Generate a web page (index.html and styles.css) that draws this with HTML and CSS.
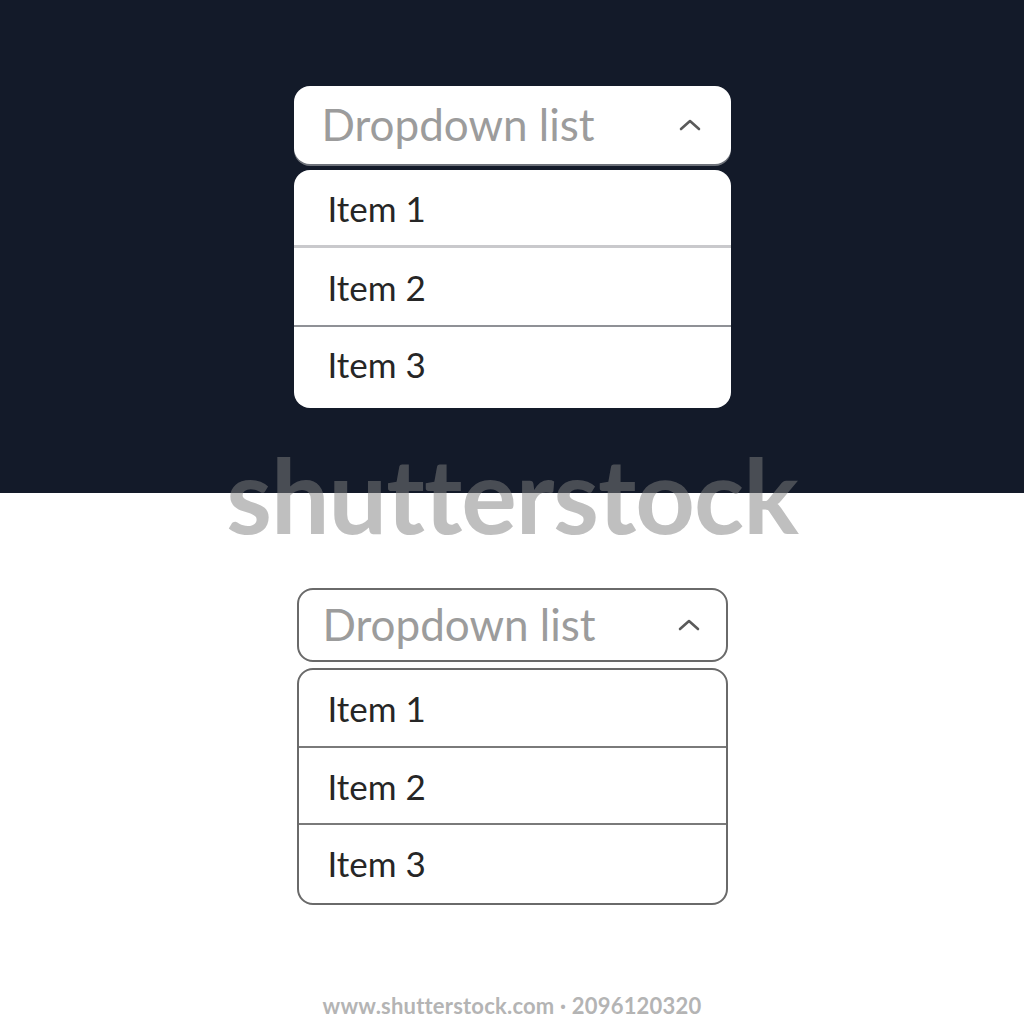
FILE: index.html
```html
<!DOCTYPE html>
<html>
<head>
<meta charset="utf-8">
<link rel="stylesheet" href="styles.css">
</head>
<body>
<div class="page">
  <section class="panel panel-dark">
    <div class="dropdown">
      <div class="dd-head">
        <span class="dd-label">Dropdown list</span>
        <svg class="chev" width="22" height="12" viewBox="0 0 22 12"><path d="M2 10 L11 2 L20 10" fill="none" stroke="#5a5a5a" stroke-width="2.6" stroke-linecap="round" stroke-linejoin="round"/></svg>
      </div>
      <ul class="dd-list">
        <li class="dd-item">Item 1</li>
        <li class="dd-item">Item 2</li>
        <li class="dd-item">Item 3</li>
      </ul>
    </div>
  </section>
  <section class="panel panel-light">
    <div class="dropdown outlined">
      <div class="dd-head">
        <span class="dd-label">Dropdown list</span>
        <svg class="chev" width="22" height="12" viewBox="0 0 22 12"><path d="M2 10 L11 2 L20 10" fill="none" stroke="#5a5a5a" stroke-width="2.6" stroke-linecap="round" stroke-linejoin="round"/></svg>
      </div>
      <ul class="dd-list">
        <li class="dd-item">Item 1</li>
        <li class="dd-item">Item 2</li>
        <li class="dd-item">Item 3</li>
      </ul>
    </div>
    <div class="footer">www.shutterstock.com · 2096120320</div>
  </section>
  <div class="watermark">shutterstock</div>
</div>
</body>
</html>
```
FILE: styles.css
```css
html, body {
  margin: 0;
  padding: 0;
  background: #ffffff;
}
.page {
  position: relative;
  width: 1024px;
  height: 1024px;
  overflow: hidden;
  font-family: Lato, "Open Sans", sans-serif;
}
.panel {
  display: flex;
  flex-direction: column;
  align-items: center;
  box-sizing: border-box;
}
.panel-dark {
  background: #131a29;
  height: 493px;
  padding-top: 86px;
}
.panel-light {
  background: #ffffff;
  height: 531px;
  padding-top: 95px;
}
.dropdown {
  display: flex;
  flex-direction: column;
  gap: 6px;
  width: 437px;
}
.dd-head {
  display: flex;
  align-items: center;
  justify-content: space-between;
  height: 78px;
  box-sizing: border-box;
  padding: 0 30px 0 28px;
  background: #ffffff;
  border-radius: 16px;
  box-shadow: 0 2px 0 #6e727a;
}
.dd-label {
  font-size: 44px;
  color: #9c9c9c;
  line-height: 1;
  margin-top: -2px;
}
.chev {
  display: block;
}
.dd-list {
  list-style: none;
  margin: 0;
  padding: 0;
  background: #ffffff;
  border-radius: 16px;
  overflow: hidden;
}
.dd-item {
  display: flex;
  align-items: center;
  box-sizing: border-box;
  height: 80px;
  padding: 0 0 0 34px;
  font-size: 35px;
  color: #262626;
}
.dd-item + .dd-item {
  border-top: 3px solid #c9c9cc;
}
.dd-item:nth-child(3) {
  border-top: 2px solid #8f9196;
  height: 83px;
  padding-bottom: 8px;
}
.dd-item:first-child {
  height: 75px;
}
.outlined {
  width: 431px;
}
.outlined .dd-head {
  height: 74px;
  border: 2px solid #6a6a6a;
  box-shadow: none;
  padding: 0 26px 0 24px;
}
.outlined .dd-list {
  border: 2px solid #6a6a6a;
  height: 237px;
  box-sizing: border-box;
}
.outlined .dd-item {
  padding-left: 29px;
  padding-bottom: 0;
  height: 77px;
}
.outlined .dd-item + .dd-item {
  border-top: 2px solid #7a7a7a;
}
.outlined .dd-item:first-child {
  height: 76px;
}
.footer {
  margin-top: auto;
  margin-bottom: 5px;
  font-size: 22px;
  font-weight: 700;
  color: #b4b4b4;
  letter-spacing: 0.2px;
}
.watermark {
  position: absolute;
  left: 0;
  right: 0;
  top: 432px;
  text-align: center;
  font-size: 104px;
  font-weight: 700;
  color: rgba(128, 128, 128, 0.5);
  letter-spacing: -1px;
  line-height: 1.2;
}
```
